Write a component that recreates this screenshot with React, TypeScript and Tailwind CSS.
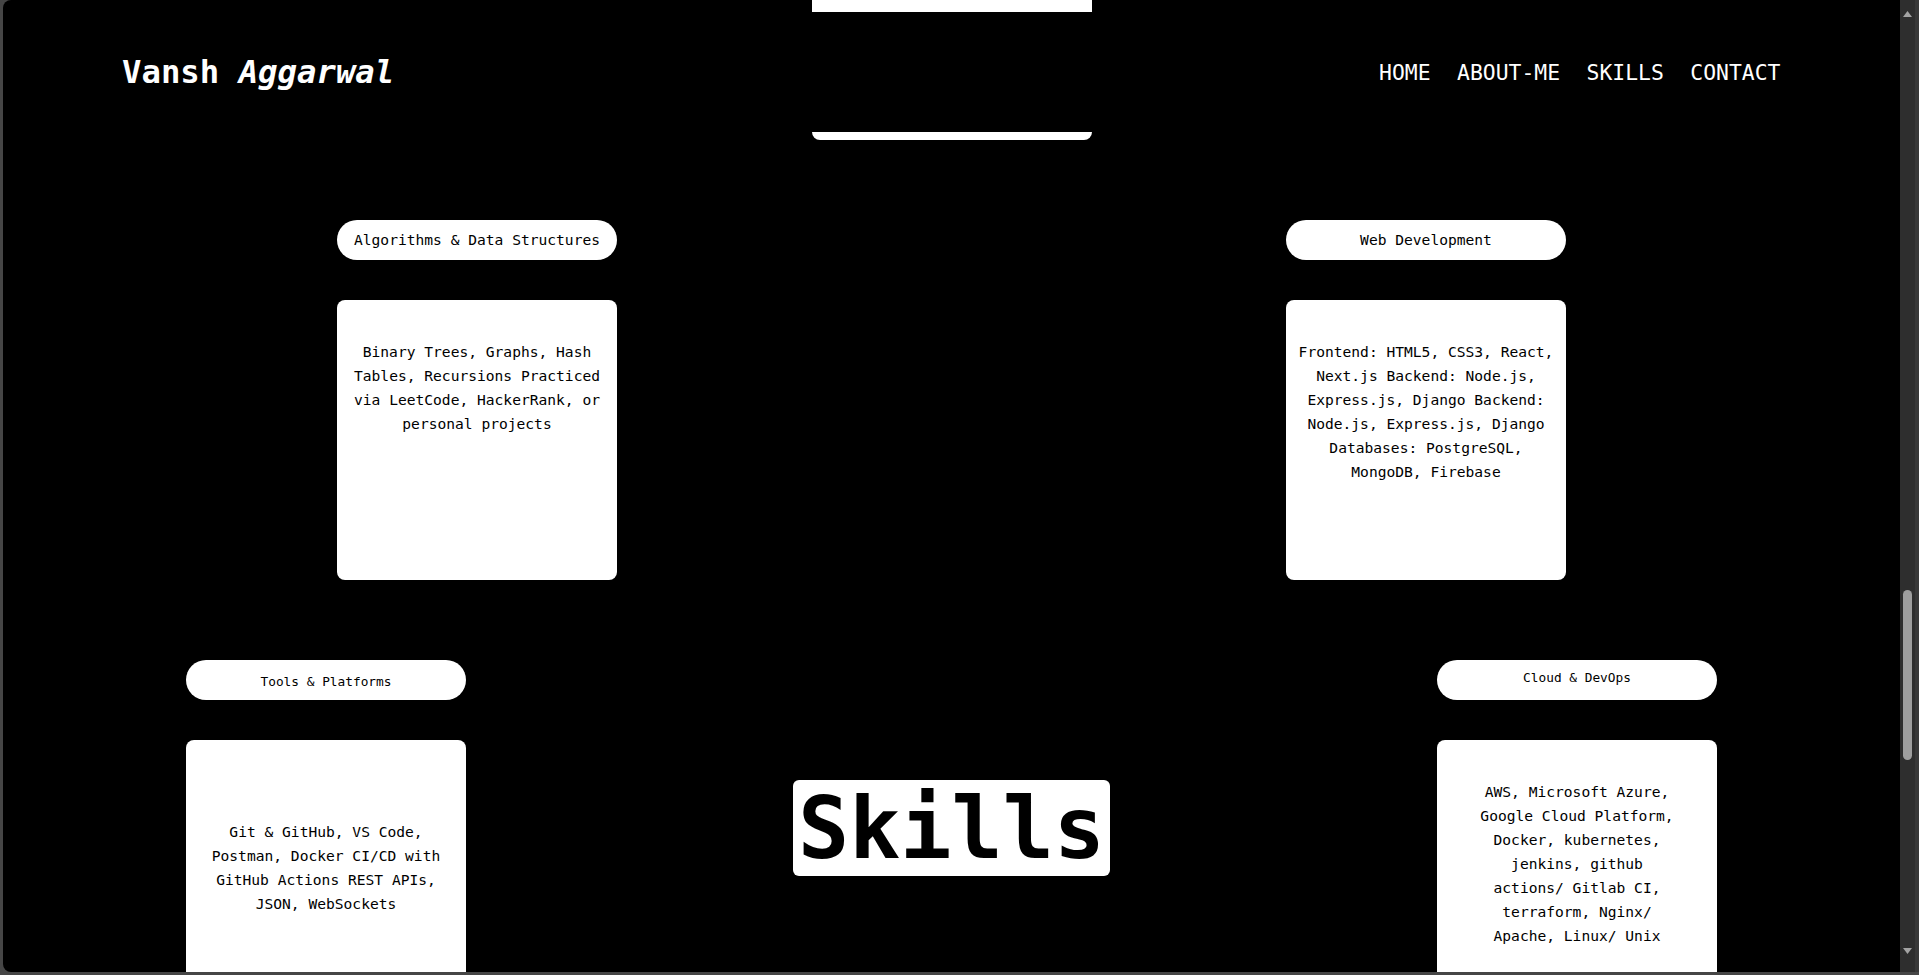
import React from "react";

const mono = { fontFamily: '"DejaVu Sans Mono", "Liberation Mono", monospace' };

type Skill = {
  title: string;
  titleClass: string;
  bodyClass: string;
  lines: string[];
};

function SkillColumn({ s }: { s: Skill }) {
  return (
    <div className="flex w-[280px] shrink-0 flex-col">
      <div className={`flex h-[40px] w-[280px] items-center justify-center rounded-full bg-white text-black ${s.titleClass}`}>
        <span className="whitespace-nowrap">{s.title}</span>
      </div>
      <div className={`mt-[40px] h-[280px] w-[280px] rounded-lg bg-white text-center text-[14.6px] leading-[24px] text-black ${s.bodyClass}`}>
        {s.lines.map((l, i) => (
          <div key={i} className="whitespace-nowrap">
            {l}
          </div>
        ))}
      </div>
    </div>
  );
}

const algo: Skill = {
  title: "Algorithms & Data Structures",
  titleClass: "text-[14.6px]",
  bodyClass: "pt-[40px]",
  lines: ["Binary Trees, Graphs, Hash", "Tables, Recursions Practiced", "via LeetCode, HackerRank, or", "personal projects"],
};
const web: Skill = {
  title: "Web Development",
  titleClass: "text-[14.6px]",
  bodyClass: "pt-[40px]",
  lines: [
    "Frontend: HTML5, CSS3, React,",
    "Next.js Backend: Node.js,",
    "Express.js, Django Backend:",
    "Node.js, Express.js, Django",
    "Databases: PostgreSQL,",
    "MongoDB, Firebase",
  ],
};
const tools: Skill = {
  title: "Tools & Platforms",
  titleClass: "text-[12.8px] pt-[3px]",
  bodyClass: "pt-[80px]",
  lines: ["Git & GitHub, VS Code,", "Postman, Docker CI/CD with", "GitHub Actions REST APIs,", "JSON, WebSockets"],
};
const cloud: Skill = {
  title: "Cloud & DevOps",
  titleClass: "text-[12.8px] pb-[5px]",
  bodyClass: "pt-[40px]",
  lines: [
    "AWS, Microsoft Azure,",
    "Google Cloud Platform,",
    "Docker, kubernetes,",
    "jenkins, github",
    "actions/ Gitlab CI,",
    "terraform, Nginx/",
    "Apache, Linux/ Unix",
  ],
};

export default function App() {
  return (
    <div className="flex h-[975px] w-full flex-col overflow-hidden bg-[#464646]" style={mono}>
      <div className="flex min-h-0 flex-1 pl-[3px]">
        <main className="relative flex-1 overflow-hidden rounded-tl-[8px] rounded-bl-[8px] bg-black">
          <div className="flex flex-col items-center">
            <div className="h-[140px] w-[280px] rounded-b-lg bg-white" />
            <div className="mt-[80px] flex justify-center gap-[669px]">
              <SkillColumn s={algo} />
              <SkillColumn s={web} />
            </div>
            <div className="mt-[80px] flex justify-center">
              <SkillColumn s={tools} />
              <div className="flex w-[971px] justify-center pt-[120px]">
                <h1 className="h-[96px] rounded-md bg-white px-[4.5px] pt-[2px] text-[85px] font-bold leading-[94px] text-black">
                  Skills
                </h1>
              </div>
              <SkillColumn s={cloud} />
            </div>
          </div>

          <header className="absolute left-0 right-0 top-[12px] flex h-[120px] items-center justify-between bg-black pl-[119px] pr-[119.5px] text-white">
            <div className="whitespace-nowrap text-[32.3px] font-bold">
              Vansh <span className="italic">Aggarwal</span>
            </div>
            <nav className="mt-[2px] flex gap-[26.5px] text-[21.4px]">
              <span>HOME</span>
              <span>ABOUT-ME</span>
              <span>SKILLS</span>
              <span>CONTACT</span>
            </nav>
          </header>
        </main>
        <div className="relative w-[15px] bg-[#2e2e2e]">
          <svg className="absolute left-[3px] top-[11px]" width="9" height="6" viewBox="0 0 9 6">
            <path d="M4.5 0 L9 6 L0 6 Z" fill="#a3a3a3" />
          </svg>
          <div className="absolute left-[3px] top-[590px] h-[170px] w-[9px] rounded-full bg-[#9e9e9e]" />
          <svg className="absolute left-[3px] top-[948px]" width="9" height="6" viewBox="0 0 9 6">
            <path d="M0 0 L9 0 L4.5 6 Z" fill="#a3a3a3" />
          </svg>
        </div>
        <div className="w-[4px] bg-[#383838]" />
      </div>
      <div className="h-[3px]" />
    </div>
  );
}
